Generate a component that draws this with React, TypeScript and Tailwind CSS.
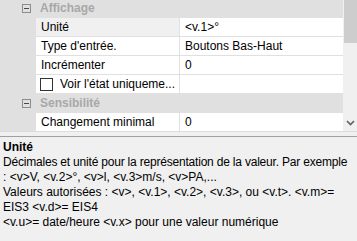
const font = "font-['Liberation_Sans',Arial,sans-serif]";

type Prop = { name: string; value: string; selected?: boolean; check?: boolean };

const Category = ({ title }: { title: string }) => (
  <div className="flex h-[18px] shrink-0 items-center">
    <div className="ml-[22px] flex h-[9px] w-[9px] items-center justify-center border border-[#8c8c8c]">
      <div className="h-px w-[5px] bg-[#4a4a4a]" />
    </div>
    <span className="ml-[9px] font-bold text-[#a8a8a8]">{title}</span>
  </div>
);

const Row = ({ p }: { p: Prop }) => (
  <div className="ml-[36px] flex h-[18px] shrink-0">
    <div
      className={
        "flex w-[143px] items-center whitespace-nowrap " +
        (p.selected ? "bg-[#f0f0f0] pl-[5px]" : p.check ? "bg-white pl-[4px]" : "bg-white pl-[5px]")
      }
    >
      {p.check && <div className="mr-[7px] h-[13px] w-[13px] shrink-0 border border-[#333333] bg-white" />}
      {p.name}
    </div>
    <div className="ml-px flex flex-1 items-center bg-white pl-[5px] whitespace-nowrap">{p.value}</div>
  </div>
);

export default function App() {
  const affichage: Prop[] = [
    { name: "Unité", value: "<v.1>°", selected: true },
    { name: "Type d'entrée.", value: "Boutons Bas-Haut" },
    { name: "Incrémenter", value: "0" },
    { name: "Voir l'état uniqueme...", value: "", check: true },
  ];

  return (
    <div className={`${font} flex h-[241px] w-[357px] flex-col overflow-hidden bg-[#f0f0f0] text-[12px] text-black`}>
      {/* property grid */}
      <div className="flex h-[131px] shrink-0">
        <div className="flex w-[343px] flex-col gap-px overflow-hidden bg-[#e0e0e0]">
          <div className="-mt-px">
            <Category title="Affichage" />
          </div>
          {affichage.map((p) => (
            <Row key={p.name} p={p} />
          ))}
          <Category title="Sensibilité" />
          <Row p={{ name: "Changement minimal", value: "0" }} />
        </div>
        <div className="flex w-[14px] flex-col justify-between bg-[#f0f0f0]">
          <div className="ml-px h-[43px] bg-[#cdcdcd]" />
          <div className="flex h-[17px] items-center justify-center">
            <svg width="9" height="6" viewBox="0 0 9 6">
              <path d="M1 1 L4.5 4.5 L8 1" fill="none" stroke="#606060" strokeWidth="1.6" />
            </svg>
          </div>
        </div>
      </div>

      {/* splitter */}
      <div className="h-[5px] shrink-0 border-t border-[#dcdcdc]" />

      {/* description */}
      <div className="flex-1 border-t border-[#a0a0a0] pl-[3px] pt-[3px] leading-[15px] whitespace-nowrap">
        <div className="font-bold">Unité</div>
        <div className="tracking-[-0.2px]">Décimales et unité pour la représentation de la valeur. Par exemple</div>
        <div>: &lt;v&gt;V, &lt;v.2&gt;°, &lt;v&gt;l, &lt;v.3&gt;m/s, &lt;v&gt;PA,...</div>
        <div>Valeurs autorisées : &lt;v&gt;, &lt;v.1&gt;, &lt;v.2&gt;, &lt;v.3&gt;, ou &lt;v.t&gt;. &lt;v.m&gt;=</div>
        <div>EIS3 &lt;v.d&gt;= EIS4</div>
        <div>&lt;v.u&gt;= date/heure &lt;v.x&gt; pour une valeur numérique</div>
      </div>
    </div>
  );
}
